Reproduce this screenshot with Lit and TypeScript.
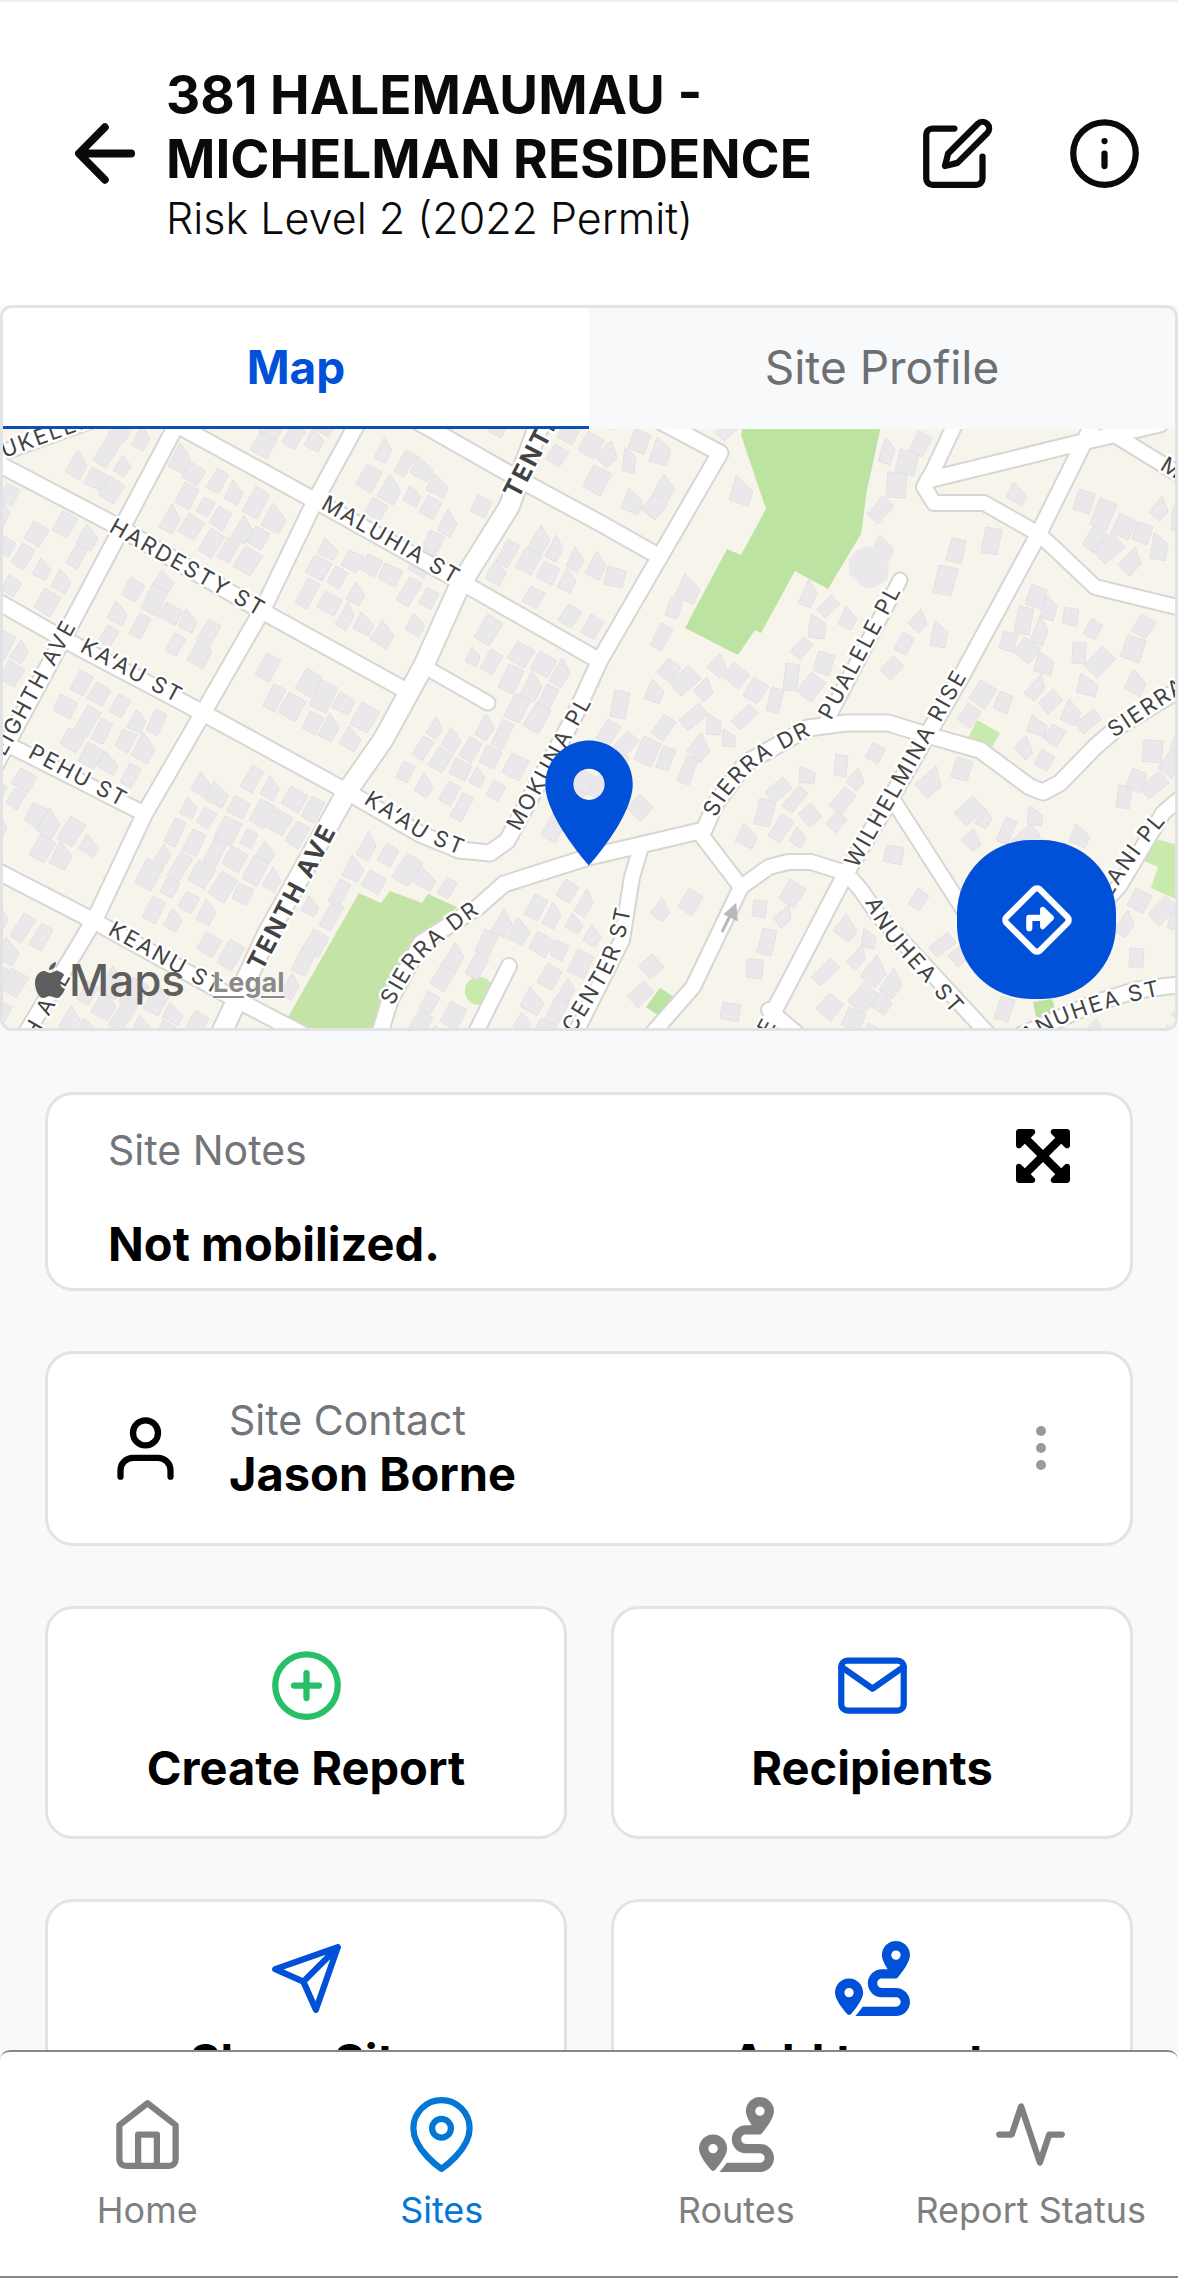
import { LitElement, html, svg, css } from "lit";
import { customElement } from "lit/decorators.js";

type Pt = [number, number];

interface Road {
  pts: Pt[];
  w: number;
}

interface Label {
  d: string;
  text: string;
  anchor?: string;
  major?: boolean;
}

const MAP = { x: 3, y: 429, w: 1172, h: 599 };

const road = (w: number, ...n: number[]): Road => {
  const pts: Pt[] = [];
  for (let i = 0; i < n.length; i += 2) pts.push([n[i], n[i + 1]]);
  return { pts, w };
};

const ROADS: Road[] = [
  road(14, -10, 457, 90, 421),
  road(15, 178, 422, 73, 620, -5, 766),
  road(15, 358, 422, 314, 503, 264, 607, 203, 713, 145, 813, 96, 917, 69, 962, 22, 1040),
  road(19, 541, 420, 509, 507, 459, 587, 424, 665, 383, 740, 348, 790, 268, 933, 220, 1036),
  road(15, -5, 462, 115, 525, 260, 610, 405, 690),
  road(15, 168, 420, 314, 500, 463, 583, 598, 660),
  road(15, 415, 420, 524, 482, 600, 523, 660, 557),
  road(15, -5, 600, 65, 640, 203, 713, 344, 790, 420, 834, 459, 850, 490, 853, 507, 841, 574, 717, 600, 660, 662, 553, 720, 453, 658, 420),
  road(13, 425, 667, 488, 703),
  road(14, -5, 738, 143, 813),
  road(15, -5, 870, 92, 920, 237, 1000, 306, 1036),
  road(15, 379, 1036, 390, 1000, 421, 943, 478, 907, 504, 884, 589, 857, 704, 830, 716, 803, 746, 763, 808, 728, 846, 723, 888, 723, 934, 737, 980, 750, 1030, 787, 1043, 792, 1060, 783, 1095, 747, 1118, 727, 1185, 686),
  road(13, 900, 580, 826, 722),
  road(15, 1092, 426, 1037, 537, 961, 677, 888, 803, 846, 873, 773, 1013, 762, 1036),
  road(14, 957, 420, 932, 473, 924, 487, 934, 503, 984, 503, 1037, 533, 1053, 547, 1095, 587, 1185, 609),
  road(15, 928, 480, 1091, 440, 1160, 424),
  road(14, 1110, 432, 1185, 478),
  road(14, 699, 832, 741, 887, 769, 867, 788, 862, 811, 862, 846, 873, 861, 890, 878, 915, 990, 1036),
  road(14, 741, 887, 693, 987, 650, 1036),
  road(14, 641, 847, 632, 877, 622, 940, 574, 1036),
  road(14, 509, 966, 474, 1036),
  road(14, 769, 1010, 800, 1036),
  road(14, 893, 800, 965, 912),
  road(14, 1185, 794, 1163, 813, 1120, 885, 1080, 930),
  road(15, 1010, 1040, 1095, 1003, 1137, 990, 1185, 984),
];

const PARKS: { d: Pt[]; fill: string }[] = [
  {
    fill: "#bde3a2",
    d: [[741, 435], [743, 426], [881, 426], [867, 490], [861, 534], [828, 589], [795, 571], [761, 633], [755, 630], [738, 655], [685, 628], [727, 549], [741, 555], [766, 509]],
  },
  {
    fill: "#c4e4a7",
    d: [[359, 893], [381, 903], [390, 891], [422, 903], [428, 894], [457, 907], [421, 943], [390, 1000], [373, 1030], [300, 1030], [288, 1017]],
  },
  { fill: "#c8eaad", d: [[977, 720], [1000, 733], [991, 749], [968, 738]] },
  { fill: "#c8eaad", d: [[1152, 838], [1178, 845], [1178, 900], [1151, 888], [1158, 867], [1142, 860]] },
  { fill: "#bde3a2", d: [[1033, 1002], [1052, 999], [1058, 1017], [1037, 1022]] },
  { fill: "#bde3a2", d: [[660, 988], [674, 997], [659, 1016], [646, 1007]] },
];

const LABELS: Label[] = [
  { d: "M4,458 L130,412", text: "UKELELE ST" },
  { d: "M108,531 L300,640", text: "HARDESTY ST" },
  { d: "M320,508 L520,622", text: "MALUHIA ST" },
  { d: "M518,500 L590,362", text: "TENTH AVE", major: true },
  { d: "M-45,848 L77,625", text: "EIGHTH AVE", anchor: "end" },
  { d: "M79,651 L240,737", text: "KA‘AU ST" },
  { d: "M27,757 L180,838", text: "PEHU ST" },
  { d: "M107,934 L290,1036", text: "KEANU ST" },
  { d: "M-32,1160 L72,975", text: "NINTH AVE", anchor: "end" },
  { d: "M262,972 L358,790", text: "TENTH AVE", major: true },
  { d: "M363,803 L420,839 L465,857 L520,870", text: "KA‘AU ST" },
  { d: "M519,832 L612,666", text: "MOKUNA PL" },
  { d: "M393,1006 Q402,990 415,968 Q432,945 500,899", text: "SIERRA DR" },
  { d: "M574,1034 L610,975 Q626,945 634,890", text: "CENTER ST" },
  { d: "M716,818 Q728,790 762,762 Q780,750 830,726", text: "SIERRA DR" },
  { d: "M831,721 L920,556", text: "PUALELE PL" },
  { d: "M857,869 L990,636", text: "WILHELMINA RISE" },
  { d: "M865,902 Q880,935 907,962 L980,1045", text: "ANUHEA ST" },
  { d: "M1026,1044 L1060,1025 Q1115,1002 1200,988", text: "ANUHEA ST" },
  { d: "M1060,985 L1114,893 Q1135,858 1167,820", text: "LANI PL", anchor: "end" },
  { d: "M1114,738 L1240,654", text: "SIERRA DR" },
  { d: "M1159,469 L1260,530", text: "MALUHIA ST" },
  { d: "M770,1036 L800,980", text: "E" },
];

const segDist = (p: Pt, a: Pt, b: Pt): number => {
  const dx = b[0] - a[0];
  const dy = b[1] - a[1];
  const t = Math.max(0, Math.min(1, ((p[0] - a[0]) * dx + (p[1] - a[1]) * dy) / (dx * dx + dy * dy)));
  return Math.hypot(p[0] - a[0] - t * dx, p[1] - a[1] - t * dy);
};

const roadDist = (p: Pt): number => {
  let best = Infinity;
  for (const r of ROADS) {
    for (let i = 1; i < r.pts.length; i++) {
      best = Math.min(best, segDist(p, r.pts[i - 1], r.pts[i]) - r.w / 2);
    }
  }
  return best;
};

const inside = (p: Pt, poly: Pt[]): boolean => {
  let hit = false;
  for (let i = 0, j = poly.length - 1; i < poly.length; j = i++) {
    const [xi, yi] = poly[i];
    const [xj, yj] = poly[j];
    if (yi > p[1] !== yj > p[1] && p[0] < ((xj - xi) * (p[1] - yi)) / (yj - yi) + xi) hit = !hit;
  }
  return hit;
};

/* Building footprints: a seeded scatter that follows the street grid and keeps clear of roads and parks. */
const buildFootprints = (): string => {
  let seed = 381;
  const rnd = () => {
    seed = (seed * 1664525 + 1013904223) % 4294967296;
    return seed / 4294967296;
  };
  const out: string[] = [];
  const ang = (29 * Math.PI) / 180;
  for (let v = -600; v < 1200; v += 27) {
    for (let u = -100; u < 1900; u += 22) {
      const ju = u + (rnd() - 0.5) * 6;
      const jv = v + (rnd() - 0.5) * 8;
      const cx = ju * Math.cos(ang) - jv * Math.sin(ang);
      const cy = 400 + ju * Math.sin(ang) + jv * Math.cos(ang);
      const r = [rnd(), rnd(), rnd(), rnd(), rnd()];
      if (cx < -10 || cx > 1190 || cy < 415 || cy > 1040) continue;
      const east = cx > 600;
      if (r[4] < (east ? 0.38 : 0.12)) continue;
      const hw = 6 + r[0] * 4;
      const hh = 8 + r[1] * 6;
      const a = ang + (east ? (r[2] - 0.5) * 0.9 : (r[2] - 0.5) * 0.12);
      const corner = (sx: number, sy: number): Pt => {
        const x = sx * hw;
        const y = sy * hh;
        return [Math.round(cx + x * Math.cos(a) - y * Math.sin(a)), Math.round(cy + x * Math.sin(a) + y * Math.cos(a))];
      };
      const cut = r[3] < 0.35 ? 0.3 : 1;
      const quad = [corner(-1, -1), corner(1, -cut), corner(1, 1), corner(-1, 1)];
      if (quad.some((q) => roadDist(q) < 4 || PARKS.some((k) => inside(q, k.d)))) continue;
      out.push("M" + quad.map((q) => q.join(",")).join("L") + "Z");
    }
  }
  return out.join("");
};

const FOOTPRINTS = buildFootprints();
const line = (pts: Pt[]) => "M" + pts.map((p) => p.join(",")).join("L");

const stroked = (body: unknown) => html`<svg
  class="icon"
  viewBox="0 0 24 24"
  fill="none"
  stroke="currentColor"
  stroke-width="2"
  stroke-linecap="round"
  stroke-linejoin="round"
  aria-hidden="true"
>${body}</svg>`;

const filled = (body: unknown) => html`<svg class="icon" viewBox="0 0 512 512" fill="currentColor" aria-hidden="true">${body}</svg>`;

const icons = {
  back: () => stroked(svg`<path stroke-width="2.5" d="M20.200 12H3.600M11.800 3.600 3.500 12l8.300 8.400" />`),
  edit: () => stroked(svg`<path d="M11 4H4a2 2 0 0 0-2 2v14a2 2 0 0 0 2 2h14a2 2 0 0 0 2-2v-7" /><path d="M18.500 2.500a2.121 2.121 0 0 1 3 3L12 15l-4 1 1-4 9.500-9.500z" />`),
  info: () => stroked(svg`<circle cx="12" cy="12" r="10" /><path d="M12 16v-4M12 8h.01" />`),
  user: () => stroked(svg`<path d="M20 21v-2a4 4 0 0 0-4-4H8a4 4 0 0 0-4 4v2" /><circle cx="12" cy="7" r="4" />`),
  plus: () => stroked(svg`<circle cx="12" cy="12" r="10" /><path d="M12 8v8M8 12h8" />`),
  mail: () => stroked(svg`<path d="M4 4h16c1.100 0 2 .9 2 2v12c0 1.100-.9 2-2 2H4c-1.100 0-2-.9-2-2V6c0-1.100.9-2 2-2z" /><path d="m22 6-10 7L2 6" />`),
  send: () => stroked(svg`<path d="M22 2 11 13M22 2l-7 20-4-9-9-4 20-7z" />`),
  home: () => stroked(svg`<path d="m3 9 9-7 9 7v11a2 2 0 0 1-2 2H5a2 2 0 0 1-2-2z" /><path d="M9 22V12h6v10" />`),
  pin: () => stroked(svg`<path d="M21 10c0 7-9 13-9 13s-9-6-9-13a9 9 0 0 1 18 0z" /><circle cx="12" cy="10" r="3" />`),
  activity: () => stroked(svg`<path d="M22 12h-4l-3 9L9 3l-3 9H2" />`),
  route: () => filled(svg`<path d="M512 96c0 50.200-59.100 125.100-84.600 155c-3.800 4.400-9.400 6.100-14.500 5H320c-17.700 0-32 14.300-32 32s14.300 32 32 32h96c53 0 96 43 96 96s-43 96-96 96H139.600c8.700-9.900 19.300-22.600 30-36.800c6.300-8.400 12.800-17.600 19-27.200H416c17.700 0 32-14.300 32-32s-14.300-32-32-32H320c-53 0-96-43-96-96s43-96 96-96h39.800c-21-31.500-39.800-67.700-39.800-96c0-53 43-96 96-96s96 43 96 96zM117.100 489.100c-3.800 4.300-7.200 8.100-10.100 11.300l-1.800 2-.2-.2c-6 4.600-14.600 4-20-1.800C59.800 473 0 402.500 0 352c0-53 43-96 96-96s96 43 96 96c0 30-21.100 67-43.500 97.900c-10.700 14.700-21.700 28-30.800 38.500l-.6 .7zM128 352a32 32 0 1 0-64 0 32 32 0 1 0 64 0zM416 128a32 32 0 1 0 0-64 32 32 0 1 0 0 64z" />`),
  expand: () => html`<svg class="icon-expand" viewBox="0 0 448 448" fill="currentColor" aria-hidden="true">
    <path d="M24 0h112c22 0 32 26 17 41l-31 32 102 102L326 73l-31-32C280 26 290 0 312 0h112c13 0 24 11 24 24v112c0 22-26 32-41 17l-32-31-102 102 102 102 32-31c15-15 41-5 41 17v112c0 13-11 24-24 24H312c-22 0-32-26-17-41l31-32-102-102-102 102 31 32c15 15 5 41-17 41H24c-13 0-24-11-24-24V312c0-22 26-32 41-17l32 31 102-102L73 122l-32 31C26 168 0 158 0 136V24C0 11 11 0 24 0z" />
  </svg>`,
};

@customElement("site-map")
export class SiteMap extends LitElement {
  static styles = css`
    :host {
      display: block;
      position: relative;
      font-family: Inter, "Liberation Sans", sans-serif;
    }
    .canvas {
      display: block;
      width: 100%;
      height: auto;
    }
    .street {
      font-size: 22px;
      letter-spacing: 2px;
      fill: #424242;
      stroke: #fff;
      stroke-width: 5px;
      stroke-linejoin: round;
      paint-order: stroke;
    }
    .major {
      font-weight: 700;
      font-size: 25px;
    }
    .credit {
      position: absolute;
      left: 32px;
      bottom: 22px;
      display: flex;
      align-items: center;
      gap: 28px;
      color: #5e5e5e;
    }
    .brand {
      display: flex;
      align-items: center;
      gap: 4px;
      font-size: 44px;
      line-height: 52px;
      font-weight: 500;
    }
    .brand svg {
      width: 30px;
      height: 36px;
    }
    .legal {
      padding-top: 4px;
      font-size: 27px;
      font-weight: 700;
      color: #8a8a88;
      text-shadow: 0 0 3px #fff, 0 0 3px #fff;
      text-decoration: underline;
      text-underline-offset: 4px;
    }
    .directions {
      position: absolute;
      right: 59px;
      bottom: 29px;
      width: 159px;
      height: 159px;
      padding: 0;
      border: 0;
      border-radius: 74px;
      background: #0050d8;
      color: #fff;
      display: grid;
      place-items: center;
    }
    .directions svg {
      width: 72px;
      height: 72px;
    }
  `;

  render() {
    return html`
      <svg class="canvas" viewBox="${MAP.x} ${MAP.y} ${MAP.w} ${MAP.h}" role="img" aria-label="Site map">
        <rect x=${MAP.x} y=${MAP.y} width=${MAP.w} height=${MAP.h} fill="#f6f4eb" />
        ${PARKS.map((p) => svg`<path d="${line(p.d)}Z" fill=${p.fill} />`)}
        <circle cx="479" cy="991" r="14" fill="#c8eaad" />
        <path d=${FOOTPRINTS} fill="#eae8ea" stroke="#e3e1e1" stroke-width="1" />
        <path d="M857,550L869,546 881,549 889,567 887,580 874,588 863,587 849,574 849,560Z" fill="#eae8ea" />
        <g fill="none" stroke="#d6d6d4" stroke-linecap="round" stroke-linejoin="round">
          ${ROADS.map((r) => svg`<path d=${line(r.pts)} stroke-width=${r.w + 4} />`)}
        </g>
        <g fill="none" stroke="#fff" stroke-linecap="round" stroke-linejoin="round">
          ${ROADS.map((r) => svg`<path d=${line(r.pts)} stroke-width=${r.w} />`)}
        </g>
        <path d="M722,932L731,914M726,914L735,906L736,919Z" stroke="#b8b8b8" stroke-width="3" fill="#b8b8b8" />
        <defs>${LABELS.map((l, i) => svg`<path id="street-${i}" d=${l.d} />`)}</defs>
        ${LABELS.map(
          (l, i) => svg`<text class="street ${l.major ? "major" : ""}" text-anchor=${l.anchor ?? "start"}>
            <textPath href="#street-${i}" startOffset=${l.anchor === "end" ? "100%" : "0"}>${l.text}</textPath>
          </text>`,
        )}
        <path
          transform="translate(514 728) scale(6.25)"
          fill="#0050d8"
          fill-rule="evenodd"
          d="M12 2C8.130 2 5 5.130 5 9c0 5.250 7 13 7 13s7-7.750 7-13c0-3.870-3.130-7-7-7zm0 9.500a2.500 2.500 0 0 1 0-5 2.500 2.500 0 0 1 0 5z"
        />
      </svg>
      <div class="credit">
        <span class="brand">
          <svg viewBox="0 0 30 36" fill="currentColor" aria-hidden="true">
            <path d="M21 0c0 5-3 8-7 8 0-4 3-7 7-8zM15 11c2 0 4-2 7-2 2 0 5 1 7 4-6 3-5 12 1 14-2 5-5 9-8 9s-4-2-7-2-4 2-7 2C4 36 0 28 0 21 0 14 4 9 9 9c2 0 4 2 6 2z" />
          </svg>
          Maps
        </span>
        <a class="legal" href="#legal">Legal</a>
      </div>
      <button class="directions" aria-label="Directions">
        <svg viewBox="0 0 70 70" fill="none" stroke="currentColor" stroke-linejoin="round" stroke-linecap="round" aria-hidden="true">
          <path d="M32 5.500a4 4 0 0 1 6 0L64.500 32a4 4 0 0 1 0 6L38 64.500a4 4 0 0 1-6 0L5.500 38a4 4 0 0 1 0-6z" stroke-width="6" />
          <path d="M27.500 43V33H48" stroke-width="6" />
          <path d="M40.500 24.500 49 33 40.500 41.500z" fill="currentColor" stroke-width="5" />
        </svg>
      </button>
    `;
  }
}

@customElement("app-root")
export class AppRoot extends LitElement {
  static styles = css`
    :host {
      display: flex;
      flex-direction: column;
      height: 100vh;
      box-sizing: border-box;
      overflow: hidden;
      background: #f7f9fb;
      color: #000;
      font-family: Inter, "Liberation Sans", sans-serif;
    }
    * {
      box-sizing: border-box;
    }
    button {
      font: inherit;
      color: inherit;
      background: none;
      border: 0;
      padding: 0;
      margin: 0;
    }
    h1,
    p {
      margin: 0;
    }
    .icon {
      display: block;
      width: 75px;
      height: 75px;
    }
    .icon-expand {
      display: block;
      width: 54px;
      height: 54px;
    }
    .header {
      flex: none;
      display: flex;
      align-items: center;
      min-height: 305px;
      padding: 0 36px 0 68px;
      border-top: 2px solid #f2f2f2;
      background: #fff;
      color: #0a0a0a;
    }
    .titles {
      flex: 1;
      padding-left: 23px;
    }
    .title {
      max-width: 700px;
      font-size: 53px;
      line-height: 64px;
      font-weight: 700;
    }
    .subtitle {
      font-size: 43px;
      line-height: 54px;
      font-weight: 300;
    }
    .actions {
      display: flex;
      gap: 72px;
    }
    .panel {
      flex: none;
      border: 3px solid #e1e3e4;
      border-radius: 12px;
      overflow: hidden;
    }
    .tabs {
      display: grid;
      grid-template-columns: 1fr 1fr;
    }
    .tab {
      height: 121px;
      border-bottom: 3px solid transparent;
      font-size: 46px;
      color: #6d7073;
      background: #f7f9fb;
    }
    .tab.active {
      background: #fff;
      color: #0050d8;
      font-weight: 700;
      border-bottom-color: #0b4fb8;
    }
    .content {
      flex: 1 1 0;
      min-height: 0;
      overflow: hidden;
      display: flex;
      flex-direction: column;
      gap: 60px;
      padding: 61px 45px 0;
    }
    .card {
      flex: none;
      border: 3px solid #e1e3e4;
      border-radius: 28px;
      background: #fff;
    }
    .notes {
      display: flex;
      justify-content: space-between;
      align-items: flex-start;
      padding: 29px 60px 16px;
    }
    .notes .expand {
      padding-top: 5px;
    }
    .label {
      font-size: 41px;
      line-height: 52px;
      color: #72767a;
    }
    .value {
      font-size: 47px;
      line-height: 56px;
      font-weight: 700;
    }
    .notes .label {
      padding-bottom: 40px;
    }
    .contact {
      display: flex;
      align-items: center;
      padding: 40px 84px 41px 60px;
    }
    .person {
      flex: 1;
      padding-left: 46px;
    }
    .dots {
      display: grid;
      gap: 7px;
    }
    .dot {
      width: 10px;
      height: 10px;
      border-radius: 50%;
      background: #979b9e;
    }
    .grid {
      flex: none;
      display: grid;
      grid-template-columns: 1fr 1fr;
      gap: 60px 44px;
    }
    .action {
      display: flex;
      flex-direction: column;
      align-items: center;
      gap: 17px;
      height: 233px;
      padding-top: 39px;
      border: 3px solid #e1e3e4;
      border-radius: 28px;
      background: #fff;
      color: #0050d8;
    }
    .action.create {
      color: #27c069;
    }
    .action .value {
      color: #000;
    }
    .nav {
      flex: none;
      display: grid;
      grid-template-columns: repeat(4, 1fr);
      height: 228px;
      border-top: 2px solid #888;
      border-bottom: 2px solid #888;
      border-radius: 10px 10px 0 0;
      background: #fff;
    }
    .nav a {
      display: flex;
      flex-direction: column;
      align-items: center;
      gap: 16px;
      padding-top: 45px;
      color: #808080;
      text-decoration: none;
      white-space: nowrap;
      font-size: 36px;
      line-height: 44px;
    }
    .nav a.current {
      color: #0376d6;
    }
  `;

  render() {
    return html`
      <header class="header">
        <button aria-label="Back">${icons.back()}</button>
        <div class="titles">
          <h1 class="title">381 HALEMAUMAU - MICHELMAN RESIDENCE</h1>
          <p class="subtitle">Risk Level 2 (2022 Permit)</p>
        </div>
        <div class="actions">
          <button aria-label="Edit">${icons.edit()}</button>
          <button aria-label="Info">${icons.info()}</button>
        </div>
      </header>
      <section class="panel">
        <div class="tabs" role="tablist">
          <button class="tab active" role="tab" aria-selected="true">Map</button>
          <button class="tab" role="tab" aria-selected="false">Site Profile</button>
        </div>
        <site-map></site-map>
      </section>
      <main class="content">
        <section class="card notes">
          <div>
            <p class="label">Site Notes</p>
            <p class="value">Not mobilized.</p>
          </div>
          <button class="expand" aria-label="Expand notes">${icons.expand()}</button>
        </section>
        <section class="card contact">
          ${icons.user()}
          <div class="person">
            <p class="label">Site Contact</p>
            <p class="value">Jason Borne</p>
          </div>
          <button class="dots" aria-label="Contact options">
            <span class="dot"></span><span class="dot"></span><span class="dot"></span>
          </button>
        </section>
        <div class="grid">
          <button class="action create">${icons.plus()}<span class="value">Create Report</span></button>
          <button class="action">${icons.mail()}<span class="value">Recipients</span></button>
          <button class="action">${icons.send()}<span class="value">Share Site</span></button>
          <button class="action">${icons.route()}<span class="value">Add to route</span></button>
        </div>
      </main>
      <nav class="nav">
        <a href="#home">${icons.home()}Home</a>
        <a class="current" href="#sites" aria-current="page">${icons.pin()}Sites</a>
        <a href="#routes">${icons.route()}Routes</a>
        <a href="#report-status">${icons.activity()}Report Status</a>
      </nav>
    `;
  }
}
